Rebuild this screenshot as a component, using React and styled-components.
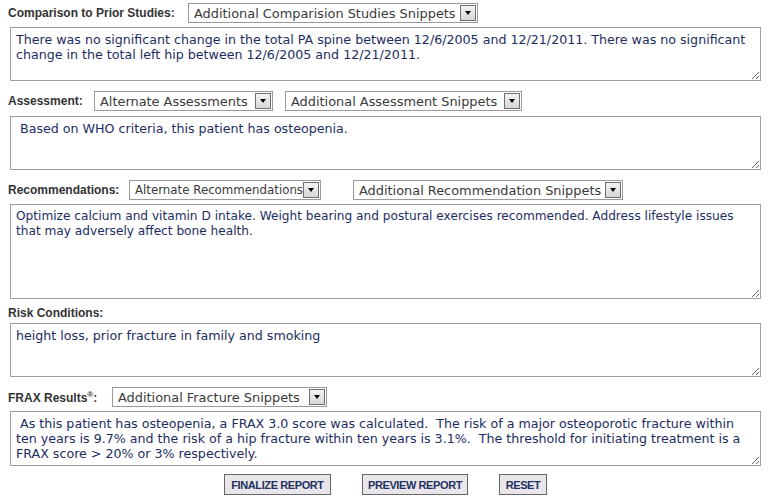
import React from 'react';
import styled, { createGlobalStyle } from 'styled-components';

const GlobalStyle = createGlobalStyle`
  html, body {
    margin: 0;
    padding: 0;
    background: #ffffff;
  }
`;

const Page = styled.div`
  width: 770px;
  padding: 3px 0 0 8px;
  box-sizing: border-box;
  font-family: Verdana, 'DejaVu Sans', sans-serif;
`;

const Section = styled.div`
  margin-bottom: ${p => (p.tight ? 6 : 10)}px;
`;

const Header = styled.div`
  display: flex;
  align-items: center;
  height: ${p => (p.short ? '16px' : '20px')};
`;

const Label = styled.span`
  font-family: 'Liberation Sans', Arial, sans-serif;
  font-weight: bold;
  font-size: 12px;
  color: #333333;
  width: ${p => p.w}px;
  flex: none;
`;

const Select = styled.div`
  display: flex;
  align-items: center;
  height: 20px;
  box-sizing: border-box;
  border: 1px solid #9a9a9a;
  padding: 0 1px 0 5px;
  margin-right: ${p => p.gap || 0}px;
  width: ${p => p.w}px;
  background: #fff;
`;

const SelectText = styled.span`
  flex: 1;
  font-size: ${p => p.size || 12.9}px;
  color: #3a3a3a;
  white-space: nowrap;
  overflow: hidden;
`;

const Arrow = styled.span`
  width: 16px;
  height: 16px;
  flex: none;
  box-sizing: border-box;
  border: 1px solid #6f6f6f;
  background: linear-gradient(#f4f4f4, #d6d6d6);
  display: flex;
  align-items: center;
  justify-content: center;
  &::after {
    content: '';
    border-left: 3.5px solid transparent;
    border-right: 3.5px solid transparent;
    border-top: 4px solid #000;
  }
`;

const TextBox = styled.textarea`
  display: block;
  margin: ${p => p.top || 4}px 0 0 2px;
  width: 751px;
  height: ${p => p.h}px;
  box-sizing: border-box;
  border: 1px solid #a0a0a0;
  padding: 4px 2px 4px ${p => p.left || 5}px;
  font-family: Verdana, 'DejaVu Sans', sans-serif;
  font-size: ${p => p.size || 12.65}px;
  line-height: 15px;
  color: #1d2d62;
  resize: both;
  outline: none;
`;

const Sup = styled.sup`
  font-size: 8px;
`;

const Buttons = styled.div`
  display: flex;
  gap: 31px;
  padding-left: 216px;
  margin-top: -2px;
`;

const Button = styled.button`
  height: 21px;
  padding: 0;
  border: 1px solid #666;
  background: #e9e5ea;
  font-family: 'Liberation Sans', Arial, sans-serif;
  font-weight: bold;
  font-size: 11px;
  letter-spacing: -0.4px;
  white-space: nowrap;
  color: #223360;
  width: ${p => p.w}px;
`;

function Dropdown({ text, w, gap, size }) {
  return (
    <Select w={w} gap={gap}>
      <SelectText size={size}>{text}</SelectText>
      <Arrow />
    </Select>
  );
}

export default function App() {
  return (
    <Page>
      <GlobalStyle />
      <Section>
        <Header>
          <Label w={180}>Comparison to Prior Studies:</Label>
          <Dropdown text="Additional Comparision Studies Snippets" w={290} />
        </Header>
        <TextBox h={54} defaultValue="There was no significant change in the total PA spine between 12/6/2005 and 12/21/2011. There was no significant change in the total left hip between 12/6/2005 and 12/21/2011." />
      </Section>
      <Section>
        <Header>
          <Label w={86}>Assessment:</Label>
          <Dropdown text="Alternate Assessments" w={179} gap={12} />
          <Dropdown text="Additional Assessment Snippets" w={237} />
        </Header>
        <TextBox h={54} top={5} left={9} defaultValue="Based on WHO criteria, this patient has osteopenia." />
      </Section>
      <Section tight>
        <Header>
          <Label w={121}>Recommendations:</Label>
          <Dropdown text="Alternate Recommendations" w={192} gap={32} size={11.8} />
          <Dropdown text="Additional Recommendation Snippets" w={270} />
        </Header>
        <TextBox h={95} size={12.15} defaultValue="Optimize calcium and vitamin D intake. Weight bearing and postural exercises recommended. Address lifestyle issues that may adversely affect bone health. " />
      </Section>
      <Section>
        <Header short>
          <Label>Risk Conditions:</Label>
        </Header>
        <TextBox h={54} top={2} defaultValue="height loss, prior fracture in family and smoking" />
      </Section>
      <Section>
        <Header>
          <Label w={104}>FRAX Results<Sup>®</Sup>:</Label>
          <Dropdown text="Additional Fracture Snippets" w={215} />
        </Header>
        <TextBox h={55} defaultValue={' As this patient has osteopenia, a FRAX 3.0 score was calculated.  The risk of a major osteoporotic fracture within ten years is 9.7% and the risk of a hip fracture within ten years is 3.1%.  The threshold for initiating treatment is a FRAX score > 20% or 3% respectively.'} />
      </Section>
      <Buttons>
        <Button w={107}>FINALIZE REPORT</Button>
        <Button w={106}>PREVIEW REPORT</Button>
        <Button w={48}>RESET</Button>
      </Buttons>
    </Page>
  );
}
